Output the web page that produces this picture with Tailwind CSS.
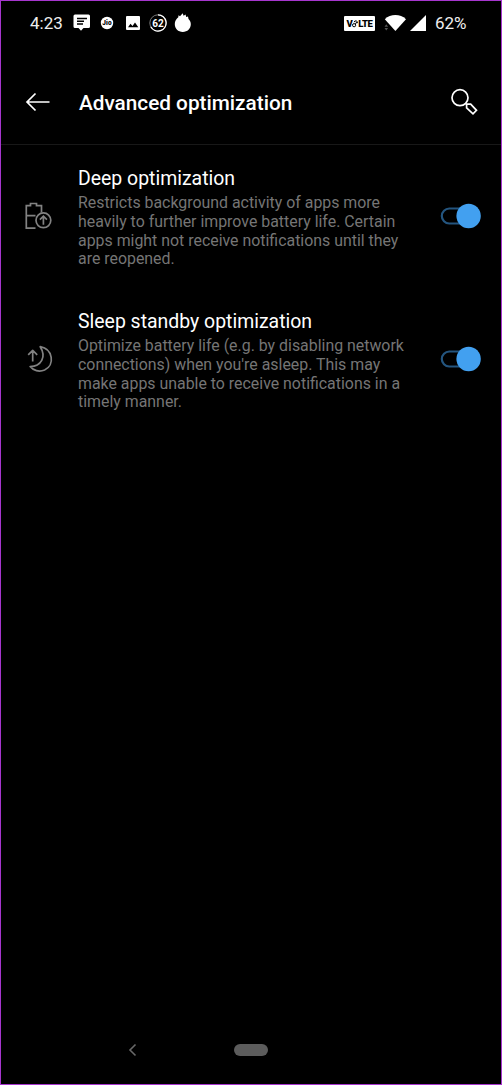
<!DOCTYPE html>
<html lang="en">
<head>
<meta charset="utf-8">
<title>Advanced optimization</title>
<script src="https://cdn.jsdelivr.net/npm/@tailwindcss/browser@4"></script>
</head>
<body class="bg-black">
<div class="flex h-[1085px] w-[502px] flex-col overflow-hidden border border-[#a636ce] bg-black font-['Roboto',sans-serif] text-white">
  <div class="flex h-[44px] shrink-0 items-center pl-[29px] pr-[34px]">
    <span class="w-[43px] whitespace-nowrap text-[17px] leading-5 text-[#eeeeee]">4:23</span>
    <svg class="h-[18px] w-[18px]" viewBox="0 0 18 18"><path fill="#fff" d="M2 .5h13.500q1.500 0 1.500 1.500v10.500q0 1.500-1.500 1.500h-5l-2.500 2.700-2.500-2.700H2q-1.500 0-1.500-1.500V2Q.5.500 2 .5z"/><path stroke="#000" stroke-width="1.500" d="M4 4.500h10M4 7.200h7M4 10h6"/></svg>
    <svg class="ml-[9px] h-[14px] w-[14px]" viewBox="0 0 14 14"><circle cx="7" cy="7" r="6.200" fill="#fff"/><text x="2.200" y="9.400" font-size="6.500" font-weight="900" textLength="9.500">Jio</text></svg>
    <svg class="ml-[12px] h-[16px] w-[14px]" viewBox="0 0 14 16"><rect width="14" height="14" x="0" y="1" rx="1" fill="#fff"/><path d="M2 12.300l2.500-3.500 2 2.300L9 7.500l3.300 4.800z"/></svg>
    <svg class="ml-[9px] h-[18px] w-[18px]" viewBox="0 0 18 18"><circle cx="9" cy="9" r="8.200" fill="none" stroke="#777" stroke-width="1"/><path d="M9 .9a8.100 8.100 0 1 1-7.200 11.800" fill="none" stroke="#fff" stroke-width="1.300"/><text x="9" y="12.600" text-anchor="middle" font-size="10" font-weight="700" fill="#fff">62</text></svg>
    <svg class="ml-[7px] h-[20px] w-[18px]" viewBox="0 0 18 20"><path fill="#fff" d="M3 5.600 4.300 4.200 4.500 2.200 6 3.200 8.700.3 9.600 2.800 11.600 1.600 12.200 4 14 3.600 14.500 6C16.200 7.500 16.800 9.200 16.800 11.200c0 4.400-3.300 7.700-8 7.700s-8-3.300-8-7.700c0-2.200.8-4.200 2.200-5.600z"/></svg>
    <div class="grow"></div>
    <svg class="h-[15px] w-[31px]" viewBox="0 0 31 15"><rect width="31" height="15" rx="1" fill="#fff"/><text x="2.600" y="11.100" font-size="9.500" font-weight="900">V</text><text x="14.300" y="11.100" font-size="9.500" font-weight="900" textLength="14.500">LTE</text><g fill="none" stroke="#000" stroke-width="1"><circle cx="10.100" cy="9.200" r="1.600"/><path d="M11.300 8.200 12.800 5.800M10.200 6.200a1.600 1.600 0 1 1 3 1"/></g></svg>
    <svg class="ml-[9px] h-[18px] w-[23px]" viewBox="0 0 23 18"><path fill="#fff" d="M.8 5.200C6.500-.3 16.300-.3 22 5.200L11.400 17z"/><path fill="#555" d="M.5 12.800 2.300 10.300l1.800 2.500zM.5 14h3.600l-1.800 2.500z"/></svg>
    <svg class="ml-[3px] h-[18px] w-[16px]" viewBox="0 0 16 18"><path fill="#fff" d="M16 1v16H0z"/></svg>
    <span class="ml-[9px] w-[32px] whitespace-nowrap text-[17px] leading-5 text-[#eeeeee]">62%</span>
  </div>
  <header class="flex h-[100px] shrink-0 items-center border-b border-[#181818] pl-[24px] pr-[22px] pt-[15px]">
    <svg class="h-[20px] w-[26px] shrink-0" viewBox="0 0 26 20" fill="none" stroke="#fff" stroke-width="1.700"><path d="M24.500 10H1.500M10.500 1.500 2 10l8.500 8.500"/></svg>
    <h1 class="ml-[28px] grow whitespace-nowrap pt-[2px] text-[20.750px] font-medium leading-6">Advanced optimization</h1>
    <svg class="h-[30px] w-[30px] shrink-0" viewBox="0 0 30 30" fill="none" stroke="#fff" stroke-width="1.700"><circle cx="11" cy="10.700" r="8"/><path d="M16.300 16.400 17.600 17.200H21.700L27.500 23.300 24 26.900 17.600 20.800V17.200"/></svg>
  </header>
  <main>
    <section class="flex h-[143px] items-center pl-[23px] pr-[20px]">
      <svg class="mb-[2px] h-[30px] w-[30px] shrink-0" viewBox="0 0 30 30" fill="none" stroke="#828282" stroke-width="1.700"><path d="M11.500 27.200H2.300V4.700h4.200V2.500h6v2.200h5v6.800M2.300 14.700h9.200"/><circle cx="19.400" cy="19.300" r="7.400"/><path d="M19.400 23.700v-8.500M15.900 18.700l3.500-3.500 3.500 3.500"/></svg>
      <div class="ml-[24px] grow whitespace-nowrap pt-[3px]">
        <h2 class="text-[19.450px] leading-6 text-white">Deep optimization</h2>
        <p class="mt-[3px] text-[15.900px] leading-[18.700px] text-[#757575]">Restricts background activity of apps more<br>heavily to further improve battery life. Certain<br>apps might not receive notifications until they<br>are reopened.</p>
      </div>
      <svg class="mb-[1px] h-[26px] w-[42px] shrink-0" viewBox="0 0 42 26"><rect x="2.800" y="5.500" width="32" height="15" rx="7.500" fill="none" stroke="#24557f" stroke-width="2.200"/><circle cx="29.600" cy="13" r="12.200" fill="#42a0f0"/></svg>
    </section>
    <section class="flex h-[143px] items-center pl-[23px] pr-[20px]">
      <svg class="mb-[2px] h-[30px] w-[30px] shrink-0" viewBox="0 0 30 30" fill="none" stroke="#828282" stroke-width="1.700" stroke-linejoin="round"><path d="M16.200 2.700c12.800 2.300 15 18.300 4.400 23.300-5.500 2.400-11.500.5-14.500-3.400C17.200 22.500 22.700 13 16.200 2.700zM8.700 17.500V6.300M4.200 10.800 8.700 6.300l4.500 4.500"/></svg>
      <div class="ml-[24px] grow whitespace-nowrap pt-[3px]">
        <h2 class="text-[19.450px] leading-6 text-white">Sleep standby optimization</h2>
        <p class="mt-[3px] text-[15.900px] leading-[18.700px] text-[#757575]">Optimize battery life (e.g. by disabling network<br>connections) when you're asleep. This may<br>make apps unable to receive notifications in a<br>timely manner.</p>
      </div>
      <svg class="mb-[1px] h-[26px] w-[42px] shrink-0" viewBox="0 0 42 26"><rect x="2.800" y="5.500" width="32" height="15" rx="7.500" fill="none" stroke="#24557f" stroke-width="2.200"/><circle cx="29.600" cy="13" r="12.200" fill="#42a0f0"/></svg>
    </section>
  </main>
  <nav class="mt-auto flex h-[68px] shrink-0 items-center pl-[127px]">
    <svg class="h-[14px] w-[9px]" viewBox="0 0 9 14" fill="none" stroke="#686868" stroke-width="1.600"><path d="M7.500 1.500 2 7l5.500 5.500"/></svg>
    <div class="ml-[97px] h-3 w-[34px] rounded-full bg-[#5c5c5c]"></div>
  </nav>
</div>
</body>
</html>
